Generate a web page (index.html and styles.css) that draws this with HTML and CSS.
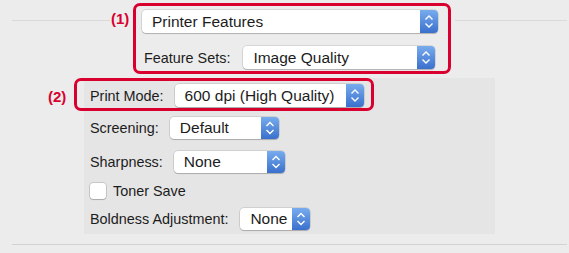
FILE: index.html
```html
<!DOCTYPE html>
<html lang="en">
<head>
    <meta charset="UTF-8">
    <meta name="viewport" content="width=device-width, initial-scale=1.0">
    <title>Printer Features</title>
    <link rel="stylesheet" href="styles.css">
</head>
<body>
    <div class="sheet">
        <div class="group-row">
            <span class="rule rule-left"></span>
            <span class="mark mark-1">(1)</span>
            <div class="callout callout-1">
                <div class="popup w-features">
                    <span class="popup-text">Printer Features</span>
                    <span class="stepper"><svg width="18" height="23" viewBox="0 0 18 23"><path d="M5.5 9.5 L9 6 L12.5 9.5 M5.5 13.5 L9 17 L12.5 13.5" fill="none" stroke="#fff" stroke-width="1.4"/></svg></span>
                </div>
                <div class="field field-sets">
                    <label>Feature Sets:</label>
                    <div class="popup w-sets">
                        <span class="popup-text">Image Quality</span>
                        <span class="stepper"><svg width="18" height="23" viewBox="0 0 18 23"><path d="M5.5 9.5 L9 6 L12.5 9.5 M5.5 13.5 L9 17 L12.5 13.5" fill="none" stroke="#fff" stroke-width="1.4"/></svg></span>
                    </div>
                </div>
            </div>
            <span class="rule rule-right"></span>
        </div>

        <div class="panel">
            <div class="callout callout-2">
                <span class="mark mark-2">(2)</span>
                <div class="field">
                    <label>Print Mode:</label>
                    <div class="popup w-mode">
                        <span class="popup-text">600 dpi (High Quality)</span>
                        <span class="stepper"><svg width="18" height="23" viewBox="0 0 18 23"><path d="M5.5 9.5 L9 6 L12.5 9.5 M5.5 13.5 L9 17 L12.5 13.5" fill="none" stroke="#fff" stroke-width="1.4"/></svg></span>
                    </div>
                </div>
            </div>
            <div class="field row-screening">
                <label>Screening:</label>
                <div class="popup small w-screening">
                    <span class="popup-text">Default</span>
                    <span class="stepper"><svg width="18" height="22" viewBox="0 0 18 22"><path d="M5.5 9 L9 5.5 L12.5 9 M5.5 13 L9 16.5 L12.5 13" fill="none" stroke="#fff" stroke-width="1.4"/></svg></span>
                </div>
            </div>
            <div class="field row-sharpness">
                <label>Sharpness:</label>
                <div class="popup small w-sharpness">
                    <span class="popup-text">None</span>
                    <span class="stepper"><svg width="18" height="22" viewBox="0 0 18 22"><path d="M5.5 9 L9 5.5 L12.5 9 M5.5 13 L9 16.5 L12.5 13" fill="none" stroke="#fff" stroke-width="1.4"/></svg></span>
                </div>
            </div>
            <div class="check-row">
                <span class="checkbox"></span>
                <span>Toner Save</span>
            </div>
            <div class="field row-boldness">
                <label>Boldness Adjustment:</label>
                <div class="popup small w-boldness">
                    <span class="popup-text">None</span>
                    <span class="stepper"><svg width="18" height="22" viewBox="0 0 18 22"><path d="M5.5 9 L9 5.5 L12.5 9 M5.5 13 L9 16.5 L12.5 13" fill="none" stroke="#fff" stroke-width="1.4"/></svg></span>
                </div>
            </div>
        </div>

        <div class="bottom-rule"></div>
    </div>
</body>
</html>
```

FILE: styles.css
```css
body {
    margin: 0;
    background-color: #ececec;
    font-family: "Liberation Sans", Arial, sans-serif;
    font-size: 14.4px;
    color: #1c1c1c;
}
.sheet {
    width: 569px;
    height: 253px;
    overflow: hidden;
}
.group-row {
    display: flex;
    align-items: flex-start;
    padding: 3px 2px 0 12px;
}
.rule {
    height: 1px;
    margin-top: 17px;
    background-color: #d9d9d9;
}
.rule-left {
    width: 98px;
}
.rule-right {
    flex: 1;
    margin-left: 4px;
}
.mark {
    color: #d9002f;
    font-weight: bold;
    font-size: 15px;
    line-height: 16px;
}
.mark-1 {
    margin: 8px 0 0 1px;
    width: 18px;
}
.callout {
    box-sizing: border-box;
    border: 3px solid #d9002f;
    border-radius: 7px;
}
.callout-1 {
    width: 318px;
    margin-left: 4px;
    padding: 4px 0 2px 6px;
}
.field {
    display: flex;
    align-items: center;
    gap: 11px;
}
.field label {
    line-height: 16px;
}
.field-sets {
    margin-top: 13px;
    padding-left: 2px;
    gap: 13px;
}
.popup {
    position: relative;
    display: flex;
    align-items: center;
    box-sizing: border-box;
    height: 23px;
    background: #fff;
    border-radius: 4px;
    box-shadow: 0 0 0 0.5px rgba(0,0,0,0.18), 0 1px 1px rgba(0,0,0,0.18);
}
.popup.small {
    height: 22px;
}
.popup-text {
    flex: 1;
    padding-left: 10px;
    font-size: 15.5px;
    white-space: nowrap;
    overflow: hidden;
}
.stepper {
    display: flex;
    width: 18px;
    height: 100%;
    border-radius: 0 4px 4px 0;
    background: linear-gradient(#78acee, #3a70cd);
}
.w-features { width: 296px; }
.w-sets { width: 192px; }
.w-mode { width: 189px; }
.w-screening { width: 109px; }
.w-sharpness { width: 111px; }
.w-boldness { width: 70px; }
.panel {
    box-sizing: border-box;
    width: 411px;
    height: 156px;
    margin: 6px 0 0 84px;
    padding: 0 0 0 6px;
    background-color: #e5e5e5;
}
.callout-2 {
    position: relative;
    width: fit-content;
    margin: -2px 0 0 -16px;
    padding: 3px 7px 1px 13px;
}
.mark-2 {
    position: absolute;
    left: -29px;
    top: 8px;
}
.row-screening {
    margin-top: 6px;
}
.row-sharpness {
    margin-top: 12px;
}
.check-row {
    display: flex;
    align-items: center;
    gap: 7px;
    margin-top: 10px;
    height: 16px;
}
.checkbox {
    box-sizing: border-box;
    width: 16px;
    height: 16px;
    background: #fff;
    border-radius: 3px;
    box-shadow: 0 0 0 0.5px rgba(0,0,0,0.25), 0 1px 1px rgba(0,0,0,0.15);
}
.row-boldness {
    margin-top: 9px;
    gap: 12px;
}
.bottom-rule {
    height: 1px;
    margin: 10px 2px 0 12px;
    background-color: #d2d2d2;
}
```
